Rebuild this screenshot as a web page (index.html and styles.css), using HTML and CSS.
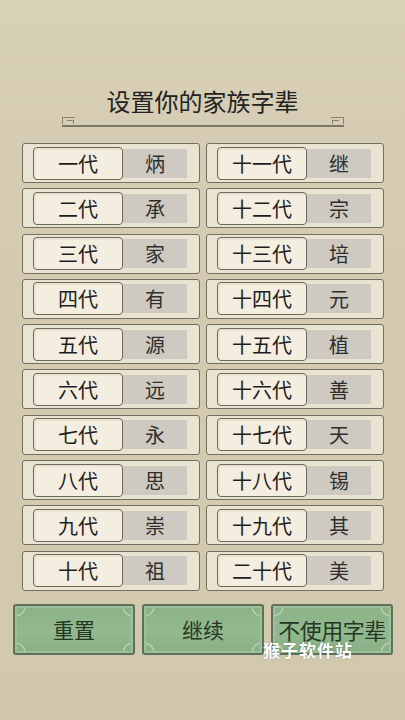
FILE: index.html
```html
<!DOCTYPE html>
<html lang="zh">
<head>
    <meta charset="UTF-8">
    <meta name="viewport" content="width=device-width, initial-scale=1.0">
    <title>设置你的家族字辈</title>
    <link rel="stylesheet" href="styles.css">
</head>
<body>
    <div class="page">
        <h1 class="title">设置你的家族字辈</h1>
        <div class="divider">
            <span class="hook hook-left"></span>
            <span class="hook hook-right"></span>
        </div>

        <div class="grid">
            <div class="card"><div class="label">一代</div><div class="value">炳</div></div>
            <div class="card"><div class="label">十一代</div><div class="value">继</div></div>
            <div class="card"><div class="label">二代</div><div class="value">承</div></div>
            <div class="card"><div class="label">十二代</div><div class="value">宗</div></div>
            <div class="card"><div class="label">三代</div><div class="value">家</div></div>
            <div class="card"><div class="label">十三代</div><div class="value">培</div></div>
            <div class="card"><div class="label">四代</div><div class="value">有</div></div>
            <div class="card"><div class="label">十四代</div><div class="value">元</div></div>
            <div class="card"><div class="label">五代</div><div class="value">源</div></div>
            <div class="card"><div class="label">十五代</div><div class="value">植</div></div>
            <div class="card"><div class="label">六代</div><div class="value">远</div></div>
            <div class="card"><div class="label">十六代</div><div class="value">善</div></div>
            <div class="card"><div class="label">七代</div><div class="value">永</div></div>
            <div class="card"><div class="label">十七代</div><div class="value">天</div></div>
            <div class="card"><div class="label">八代</div><div class="value">思</div></div>
            <div class="card"><div class="label">十八代</div><div class="value">锡</div></div>
            <div class="card"><div class="label">九代</div><div class="value">崇</div></div>
            <div class="card"><div class="label">十九代</div><div class="value">其</div></div>
            <div class="card"><div class="label">十代</div><div class="value">祖</div></div>
            <div class="card"><div class="label">二十代</div><div class="value">美</div></div>
        </div>

        <div class="buttons">
            <div class="btn">重置</div>
            <div class="btn">继续</div>
            <div class="btn btn-wide">不使用字辈</div>
        </div>

        <div class="watermark">猴子软件站</div>
    </div>
</body>
</html>
```

FILE: styles.css
```css
body {
    margin: 0;
    font-family: "Noto Sans CJK SC", "Noto Sans", sans-serif;
    background: #d2c9ae;
}

.page {
    position: relative;
    width: 405px;
    height: 720px;
    overflow: hidden;
    background: linear-gradient(180deg, #d8d0b7 0%, #d3cab0 40%, #d2c9ad 100%);
}

.title {
    margin: 0;
    padding-top: 84px;
    height: 34px;
    line-height: 34px;
    text-align: center;
    font-size: 24px;
    font-weight: normal;
    color: #222;
}

.divider {
    position: relative;
    margin: 7px 0 0 62px;
    width: 282px;
    height: 2px;
    background: #7c7663;
}

.hook {
    position: absolute;
    bottom: 3px;
    width: 12px;
    height: 6px;
}

.hook-left {
    left: 0;
    border-left: 1px solid #8a846f;
    border-top: 1px solid #8a846f;
}

.hook-left::after {
    content: "";
    position: absolute;
    left: 4px;
    top: 2px;
    width: 6px;
    height: 3px;
    border-top: 1px solid #8a846f;
    border-right: 1px solid #8a846f;
}

.hook-right {
    right: 0;
    border-right: 1px solid #8a846f;
    border-top: 1px solid #8a846f;
}

.hook-right::after {
    content: "";
    position: absolute;
    right: 4px;
    top: 2px;
    width: 6px;
    height: 3px;
    border-top: 1px solid #8a846f;
    border-left: 1px solid #8a846f;
}

.grid {
    display: grid;
    grid-template-columns: 178px 178px;
    column-gap: 6px;
    row-gap: 5.3px;
    margin: 16px 0 0 22px;
}

.card {
    box-sizing: border-box;
    height: 40px;
    display: flex;
    align-items: center;
    padding: 0 12px 0 10px;
    background: #e9e3d1;
    border: 1.5px solid #736e63;
    border-radius: 3px;
}

.label {
    box-sizing: border-box;
    width: 90px;
    height: 33px;
    line-height: 31px;
    text-align: center;
    font-size: 20px;
    color: #1e1e1e;
    background: #f4eee0;
    border: 1.5px solid #6d675b;
    border-radius: 4px;
    box-shadow: inset 2px 2px 0 #ebe4d2;
}

.value {
    flex: 1;
    height: 29px;
    line-height: 29px;
    text-align: center;
    font-size: 20px;
    color: #2e2e2e;
    background: #cecac1;
}

.buttons {
    display: flex;
    gap: 7px;
    margin: 13px 0 0 13px;
}

.btn {
    box-sizing: border-box;
    width: 122px;
    height: 51px;
    line-height: 47px;
    text-align: center;
    font-size: 21px;
    color: #263625;
    border: 2px solid #5f6f5b;
    border-radius: 3px;
    box-shadow: inset 0 0 0 2px #9cc097;
    background:
        radial-gradient(circle at 0 0, transparent 9px, #b4d0ae 9.5px, #b4d0ae 10.5px, transparent 11px),
        radial-gradient(circle at 100% 0, transparent 9px, #b4d0ae 9.5px, #b4d0ae 10.5px, transparent 11px),
        radial-gradient(circle at 0 100%, transparent 9px, #b4d0ae 9.5px, #b4d0ae 10.5px, transparent 11px),
        radial-gradient(circle at 100% 100%, transparent 9px, #b4d0ae 9.5px, #b4d0ae 10.5px, transparent 11px),
        linear-gradient(180deg, #8bb287 0%, #93ba8f 55%, #87ae84 100%);
}

.btn-wide {
    letter-spacing: -0.5px;
    font-size: 22px;
}

.watermark {
    position: absolute;
    left: 263px;
    top: 637px;
    font-size: 17px;
    font-weight: bold;
    color: #ffffff;
    letter-spacing: 1px;
    text-shadow: 0 0 2px rgba(0, 0, 0, 0.3);
}
```
